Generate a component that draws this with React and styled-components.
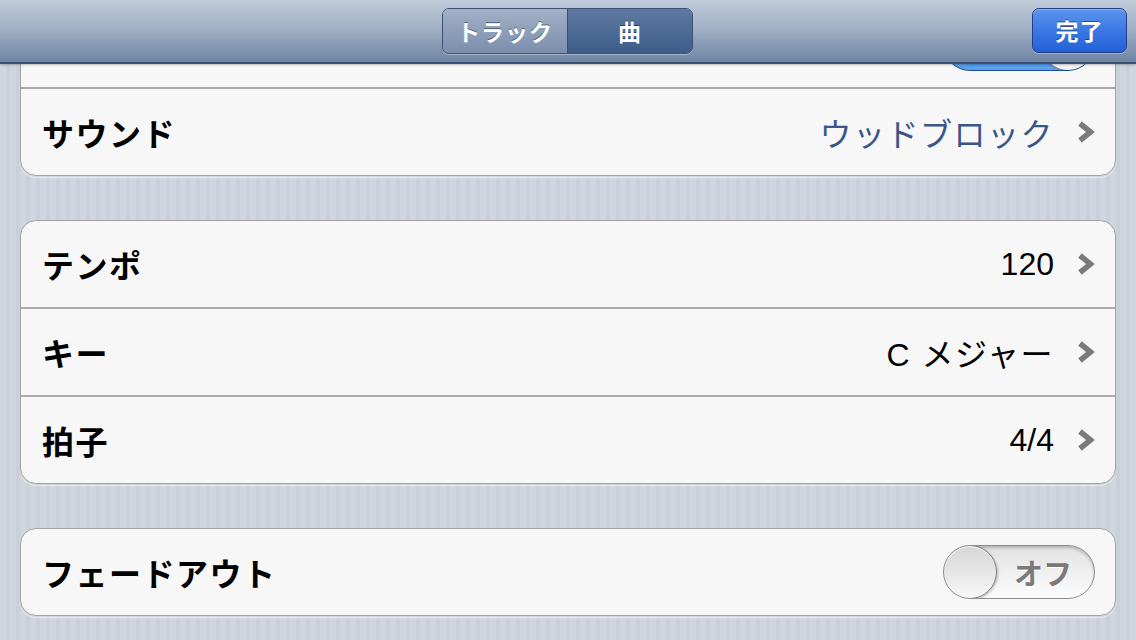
import React from "react";
import styled, { createGlobalStyle } from "styled-components";

const Global = createGlobalStyle`
  html, body { margin: 0; padding: 0; }
  body {
    font-family: "Liberation Sans", "Noto Sans CJK JP", sans-serif;
    -webkit-font-smoothing: antialiased;
  }
  #root { width: 1136px; height: 640px; overflow: hidden; }
`;

const Screen = styled.div`
  width: 1136px;
  height: 640px;
  display: flex;
  flex-direction: column;
  overflow: hidden;
  background-color: #cfd3dd;
  background-image: repeating-linear-gradient(
    90deg,
    #d1d5df 0px,
    #d1d5df 6px,
    #cad0da 6px,
    #cad0da 10px
  );
`;

const NavBar = styled.header`
  position: relative;
  z-index: 2;
  flex: 0 0 auto;
  height: 62px;
  display: grid;
  grid-template-columns: 1fr auto 1fr;
  align-items: center;
  padding: 0 9px 0 0;
  background: linear-gradient(#c0cbda 0%, #a3b2c6 45%, #8598b3 75%, #6f86a5 100%);
  border-top: 1px solid #dce3ec;
  border-bottom: 2px solid #3a4f6e;
  box-shadow: 0 1px 2px rgba(0, 0, 0, 0.25);
  box-sizing: content-box;
  margin-top: -1px;
`;

const Segmented = styled.div`
  grid-column: 2;
  display: flex;
  height: 44px;
  margin-left: 8px;
  border: 1px solid #3d5170;
  border-radius: 7px;
  overflow: hidden;
  box-shadow: 0 1px 0 rgba(255, 255, 255, 0.35);
`;

const Segment = styled.div`
  width: 124px;
  display: flex;
  align-items: center;
  justify-content: center;
  font-family: "Noto Sans CJK JP", sans-serif;
  font-weight: 700;
  font-size: 23px;
  letter-spacing: 1px;
  color: #fff;
  text-shadow: 0 -1px 0 rgba(0, 0, 0, 0.45);
  background: ${(p) =>
    p.$active
      ? "linear-gradient(#5f7aa2 0%, #4e6a95 50%, #3f5c8a 100%)"
      : "linear-gradient(#a2b1c6 0%, #8e9fb9 50%, #7b8fad 100%)"};
  & + & {
    border-left: 1px solid #3a4e6e;
  }
`;

const DoneButton = styled.button`
  grid-column: 3;
  justify-self: end;
  margin-top: -2px;
  width: 95px;
  height: 45px;
  border: 1px solid #1f3f86;
  border-radius: 7px;
  background: linear-gradient(#5c95ee 0%, #3b78e4 50%, #2360d6 100%);
  color: #fff;
  font-family: "Noto Sans CJK JP", sans-serif;
  font-weight: 700;
  font-size: 23px;
  letter-spacing: 1px;
  text-shadow: 0 -1px 0 rgba(0, 0, 0, 0.4);
  box-shadow: 0 1px 0 rgba(255, 255, 255, 0.3), inset 0 1px 0 rgba(255, 255, 255, 0.3);
  padding: 0;
`;

const Content = styled.main`
  flex: 1 1 auto;
  overflow: hidden;
  padding: 0 20px;
  display: flex;
  flex-direction: column;
  gap: 44px;
`;

const Card = styled.section`
  background: #f7f7f7;
  border: 1px solid #a2a2a2;
  border-radius: 16px;
  box-shadow: 0 1px 0 rgba(0, 0, 0, 0.08), 0 2px 1px rgba(255, 255, 255, 0.5);
  overflow: hidden;
  &:first-child {
    margin-top: -64px;
  }
`;

const Row = styled.div`
  height: 86px;
  display: flex;
  align-items: center;
  padding: 0 20px 0 21px;
  & + & {
    border-top: 2px solid #ababab;
  }
`;

const Label = styled.span`
  flex: 1 1 auto;
  font-family: "Noto Sans CJK JP", sans-serif;
  font-weight: 700;
  font-size: 32px;
  letter-spacing: 1.5px;
  color: #000;
`;

const Value = styled.span`
  font-family: "Liberation Sans", "Noto Sans CJK JP", sans-serif;
  font-size: 32px;
  letter-spacing: ${(p) => (p.$spaced ? "1.5px" : "0")};
  color: ${(p) => (p.$accent ? "#3a5688" : "#000")};
  margin-right: 23px;
`;

const Chevron = styled.svg`
  flex: 0 0 auto;
  width: 18px;
  height: 24px;
`;

const SwitchTrack = styled.div`
  position: relative;
  width: 152px;
  height: 54px;
  border-radius: 27px;
  box-sizing: border-box;
  border: 1px solid ${(p) => (p.$on ? "#1c4f99" : "#8c8c8c")};
  background: ${(p) =>
    p.$on
      ? "linear-gradient(#1a62c9 0%, #3b86e3 55%, #5fa3ec 100%)"
      : "linear-gradient(#e2e2e2 0%, #efefef 50%, #fdfdfd 100%)"};
  box-shadow: inset 0 2px 3px rgba(0, 0, 0, 0.2);
  display: flex;
  align-items: center;
  justify-content: ${(p) => (p.$on ? "flex-start" : "flex-end")};
  padding: 0 22px;
  overflow: hidden;
`;

const SwitchText = styled.span`
  font-family: "Noto Sans CJK JP", sans-serif;
  font-weight: 700;
  font-size: 29px;
  color: ${(p) => (p.$on ? "#fff" : "#7a7a7a")};
  text-shadow: ${(p) => (p.$on ? "0 -1px 0 rgba(0,0,0,0.3)" : "0 1px 0 #fff")};
`;

const Knob = styled.div`
  position: absolute;
  top: -1px;
  ${(p) => (p.$on ? "right: -1px;" : "left: -1px;")}
  width: 54px;
  height: 54px;
  border-radius: 50%;
  box-sizing: border-box;
  border: 1px solid #7b7b7b;
  background: linear-gradient(#d6d6d6 0%, #e6e6e6 50%, #f8f8f8 100%);
  box-shadow: inset 0 1px 1px #fff, 1px 1px 3px rgba(0, 0, 0, 0.25);
`;

function Switch({ on, showText = true }) {
  return (
    <SwitchTrack $on={on} role="switch" aria-checked={!!on}>
      {showText && <SwitchText $on={on}>{on ? "オン" : "オフ"}</SwitchText>}
      <Knob $on={on} />
    </SwitchTrack>
  );
}

function Disclosure() {
  return (
    <Chevron viewBox="0 0 18 24">
      <polyline
        points="3,3.5 13.5,12 3,20.5"
        fill="none"
        stroke="#7a7a7a"
        strokeWidth="5.5"
        strokeLinecap="butt"
        strokeLinejoin="miter"
      />
    </Chevron>
  );
}

function LinkRow({ label, value, accent, spaced }) {
  return (
    <Row>
      <Label>{label}</Label>
      <Value $accent={accent} $spaced={spaced}>{value}</Value>
      <Disclosure />
    </Row>
  );
}

export default function App() {
  return (
    <>
      <Global />
      <Screen>
        <NavBar>
          <Segmented>
            <Segment>トラック</Segment>
            <Segment $active>曲</Segment>
          </Segmented>
          <DoneButton>完了</DoneButton>
        </NavBar>
        <Content>
          <Card>
            <Row>
              <Label aria-label="メトロノーム" />
              <Switch on showText={false} />
            </Row>
            <LinkRow label="サウンド" value="ウッドブロック" accent spaced />
          </Card>
          <Card>
            <LinkRow label="テンポ" value="120" />
            <LinkRow label="キー" value="C メジャー" spaced />
            <LinkRow label="拍子" value="4/4" />
          </Card>
          <Card>
            <Row>
              <Label>フェードアウト</Label>
              <Switch />
            </Row>
          </Card>
        </Content>
      </Screen>
    </>
  );
}
